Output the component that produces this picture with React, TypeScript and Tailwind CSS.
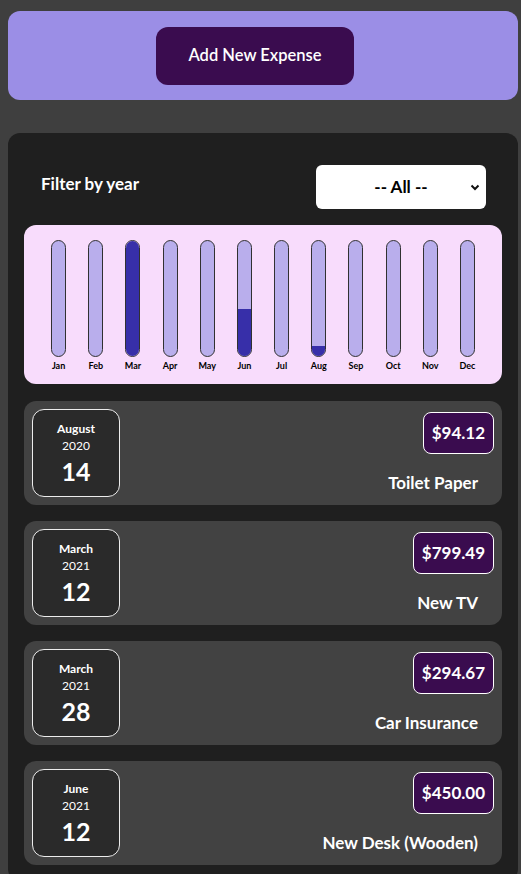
import React from "react";

const months = ["Jan","Feb","Mar","Apr","May","Jun","Jul","Aug","Sep","Oct","Nov","Dec"];

const expenses = [
  { month: "August", year: "2020", day: "14", price: "$94.12", title: "Toilet Paper", m: 7, amount: 94.12 },
  { month: "March", year: "2021", day: "12", price: "$799.49", title: "New TV", m: 2, amount: 799.49 },
  { month: "March", year: "2021", day: "28", price: "$294.67", title: "Car Insurance", m: 2, amount: 294.67 },
  { month: "June", year: "2021", day: "12", price: "$450.00", title: "New Desk (Wooden)", m: 5, amount: 450 },
];

export default function App() {
  const totals = new Array(12).fill(0);
  expenses.forEach((e) => (totals[e.m] += e.amount));
  const max = Math.max(...totals);

  return (
    <div
      className="min-h-screen bg-[#3f3f3f] pt-[11px] pb-4"
      style={{ fontFamily: "Lato, 'Noto Sans', sans-serif" }}
    >
      <div className="ml-2 mr-[3px] h-[89px] rounded-xl bg-[#9b8ee6] flex items-center justify-center pr-4">
        <button className="w-[198px] h-[58px] rounded-xl bg-[#3a0c4f] text-white text-[16.5px] font-semibold">
          Add New Expense
        </button>
      </div>

      <div className="ml-2 mr-[3px] mt-[33px] rounded-xl bg-[#1f1f1f] px-4 pt-8 pb-4">
        <div className="flex items-center justify-between h-[44px] pl-[17px] pr-4">
          <span className="text-white font-bold text-[17px] pb-[6px]">Filter by year</span>
          <div className="relative w-[170px] h-[44px] bg-white rounded-md flex items-center justify-center">
            <span className="text-black font-bold text-[17px]">-- All --</span>
            <svg className="absolute right-[6px] top-1/2 -translate-y-1/2" width="10" height="8" viewBox="0 0 10 8">
              <path d="M1.5 2.5 L5 6 L8.5 2.5" stroke="#111" strokeWidth="2" fill="none" />
            </svg>
          </div>
        </div>

        <div className="mt-4 rounded-xl bg-[#f8dcfc] px-4 pt-[15px] pb-[12px] flex">
          {months.map((mo, i) => {
            const pct = max > 0 ? (totals[i] / max) * 100 : 0;
            return (
              <div key={mo} className="flex-1 flex flex-col items-center">
                <div className="w-[15px] h-[117px] rounded-xl border border-[#313131] bg-[#b9aeec] overflow-hidden flex flex-col justify-end">
                  <div className="w-full bg-[#372fa9]" style={{ height: `${pct}%` }} />
                </div>
                <div className="mt-[2px] h-[13px] leading-[13px] text-[9px] font-bold text-black">{mo}</div>
              </div>
            );
          })}
        </div>

        <div className="mt-[17px] flex flex-col gap-4">
          {expenses.map((e, idx) => (
            <div key={idx} className="h-[104px] rounded-xl bg-[#424242] p-2 flex">
              <div className="w-[88px] h-[88px] rounded-xl border border-[#ececec] bg-[#2a2a2a] text-white flex flex-col items-center pt-[11px]">
                <div className="text-[12px] font-bold leading-[16px]">{e.month}</div>
                <div className="text-[12px] leading-[18px]">{e.year}</div>
                <div className="text-[25px] font-bold leading-[30px] mt-[1px]">{e.day}</div>
              </div>
              <div className="flex-1 flex flex-col items-end">
                <div className="mt-[3px] h-[42px] px-[8px] rounded-lg border border-white bg-[#3a0c4f] text-white font-bold text-[17px] flex items-center">
                  {e.price}
                </div>
                <div className="mt-[18px] mr-4 text-white font-bold text-[17px] leading-[22px]">{e.title}</div>
              </div>
            </div>
          ))}
        </div>
      </div>
    </div>
  );
}
